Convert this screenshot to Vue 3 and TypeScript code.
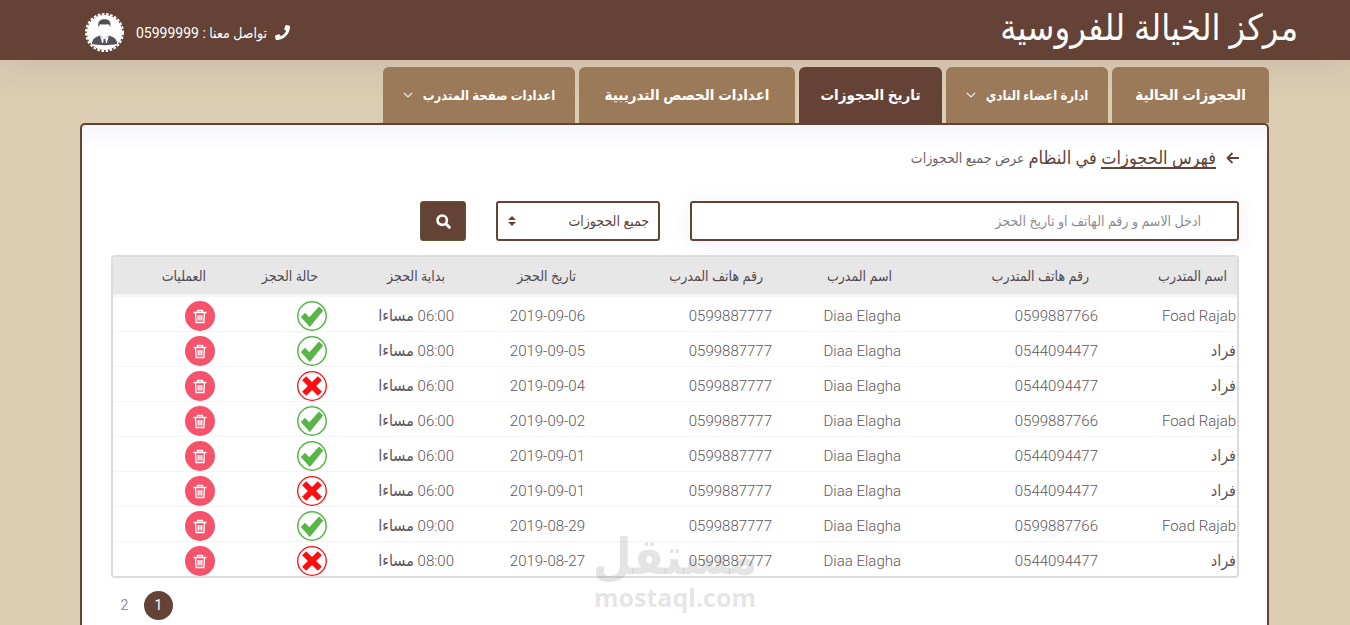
<script setup lang="ts">
import { ref } from 'vue'

interface Tab {
  label: string
  size: string
  menu: boolean
  active: boolean
}

interface Booking {
  known: boolean
  trainee: string
  traineePhone: string
  trainer: string
  trainerPhone: string
  date: string
  start: string
  ok: boolean
}

const tabs: Tab[] = [
  { label: 'الحجوزات الحالية', size: 'tab-current', menu: false, active: false },
  { label: 'ادارة اعضاء النادي', size: 'tab-members', menu: true, active: false },
  { label: 'تاريخ الحجوزات', size: 'tab-history', menu: false, active: true },
  { label: 'اعدادات الحصص التدريبية', size: 'tab-lessons', menu: false, active: false },
  { label: 'اعدادات صفحة المتدرب', size: 'tab-page', menu: true, active: false },
]

const columns = [
  { key: 'trainee', label: 'اسم المتدرب' },
  { key: 'trainee-phone', label: 'رقم هاتف المتدرب' },
  { key: 'trainer', label: 'اسم المدرب' },
  { key: 'trainer-phone', label: 'رقم هاتف المدرب' },
  { key: 'date', label: 'تاريخ الحجز' },
  { key: 'start', label: 'بداية الحجز' },
  { key: 'status', label: 'حالة الحجز' },
  { key: 'actions', label: 'العمليات' },
]

function booking(known: boolean, date: string, start: string, ok: boolean): Booking {
  return {
    known,
    trainee: known ? 'Foad Rajab' : 'فراد',
    traineePhone: known ? '0599887766' : '0544094477',
    trainer: 'Diaa Elagha',
    trainerPhone: '0599887777',
    date,
    start,
    ok,
  }
}

const bookings = ref<Booking[]>([
  booking(true, '2019-09-06', '06:00', true),
  booking(false, '2019-09-05', '08:00', true),
  booking(false, '2019-09-04', '06:00', false),
  booking(true, '2019-09-02', '06:00', true),
  booking(false, '2019-09-01', '06:00', true),
  booking(false, '2019-09-01', '06:00', false),
  booking(true, '2019-08-29', '09:00', true),
  booking(false, '2019-08-27', '08:00', false),
])

const query = ref('')
const filter = ref('all')

function remove(index: number) {
  bookings.value.splice(index, 1)
}
</script>

<template>
  <div class="page" dir="rtl" lang="ar">
    <header class="topbar">
      <div class="brand">مركز الخيالة للفروسية</div>
      <div class="contact">
        <svg class="phone" viewBox="0 0 512 512" aria-hidden="true">
          <path d="M493 25 389 1c-11-3-23 3-27 14l-48 112c-4 10-1 21 7 28l61 50c-36 76-99 139-177 177l-50-61c-7-8-18-11-28-7L15 362c-11 4-17 16-14 27l24 104c3 11 12 19 24 19 256 0 463-207 463-463 0-12-8-21-19-24z" fill="#fff" />
        </svg>
        <span class="contact-text">تواصل معنا : 05999999</span>
        <svg class="avatar" viewBox="0 0 39 39" role="img" aria-label="الحساب">
          <circle cx="19.5" cy="19.5" r="17.6" fill="#fff" />
          <circle cx="19.5" cy="19.5" r="18.5" fill="none" stroke="#fff" stroke-width="2" stroke-dasharray="2.6 1.6" />
          <path d="M13.500 14.500c-1.200-6 1.500-8.300 6-8.300s7 2.300 5.700 8.300c-.5-2-.7-3-2.200-3.300-3 .6-5 .4-7.500 0-1 .6-1.400 1.500-2 3.300z" fill="#514c54" />
          <path d="M14.200 15c.5 3.500 2.500 6 5.100 6s4.700-2.500 5.200-6" fill="none" stroke="#e9e7ea" stroke-width=".6" />
          <path d="M7 31c0-4 1.500-6.500 8.500-8.500l4 3.500 4-3.500c7 2 8.500 4.500 8.500 8.500-6 1.500-19 1.500-25 0z" fill="#56515b" />
          <path d="M15 22.500 17.200 30h4.600l2.200-7.500-4.500 3.500z" fill="#fff" />
          <path d="M18.700 26h1.600l.7 4.500h-3z" fill="#56515b" />
        </svg>
      </div>
    </header>

    <div class="container">
      <nav class="tabs" aria-label="القائمة الرئيسية">
        <a
          v-for="tab in tabs"
          :key="tab.label"
          href="#"
          class="tab"
          :class="[tab.size, { active: tab.active, menu: tab.menu }]"
        >
          <span>{{ tab.label }}</span>
          <svg v-if="tab.menu" class="chevron" viewBox="0 0 10 6" aria-hidden="true">
            <path d="m.8.8 4.200 4 4.200-4" fill="none" stroke="#fff" stroke-width="1.100" />
          </svg>
        </a>
      </nav>

      <main class="panel">
        <h1 class="heading">
          <svg class="back" viewBox="0 0 13 12" aria-hidden="true">
            <path d="M6.500 1 1.500 6l5 5M1.500 6H13" fill="none" stroke="#5c4339" stroke-width="1.800" />
          </svg>
          <span class="heading-text"><a href="#">فهرس الحجوزات</a> في النظام</span>
          <small>عرض جميع الحجوزات</small>
        </h1>

        <form class="filters" @submit.prevent>
          <input
            v-model="query"
            class="search"
            type="text"
            aria-label="بحث"
            placeholder="ادخل الاسم و رقم الهاتف او تاريخ الحجز"
          />
          <div class="select-box">
            <select v-model="filter" aria-label="نوع الحجوزات">
              <option value="all">جميع الحجوزات</option>
            </select>
            <svg class="sort" viewBox="0 0 8 10" aria-hidden="true">
              <path d="M4 0 8 4H0zM0 6h8l-4 4z" fill="#644336" />
            </svg>
          </div>
          <button class="submit" type="submit" aria-label="ابحث">
            <svg viewBox="0 0 15 15" aria-hidden="true">
              <circle cx="6.200" cy="6.200" r="4.700" fill="none" stroke="#fff" stroke-width="2.600" />
              <path d="m9.800 9.800 3.500 3.500" stroke="#fff" stroke-width="3" stroke-linecap="round" />
            </svg>
          </button>
        </form>

        <div class="table-box">
          <table>
            <colgroup>
              <col v-for="column in columns" :key="column.key" :class="'col-' + column.key" />
            </colgroup>
            <thead>
              <tr>
                <th v-for="column in columns" :key="column.key" scope="col">{{ column.label }}</th>
              </tr>
            </thead>
            <tbody>
              <tr v-for="(row, index) in bookings" :key="row.date + row.start + index">
                <td><span :class="{ arabic: !row.known }">{{ row.trainee }}</span></td>
                <td>{{ row.traineePhone }}</td>
                <td>{{ row.trainer }}</td>
                <td>{{ row.trainerPhone }}</td>
                <td><bdi dir="ltr">{{ row.date }}</bdi></td>
                <td>{{ row.start }} <span class="arabic">مساءا</span></td>
                <td>
                  <svg v-if="row.ok" class="status" viewBox="0 0 30 30" role="img" aria-label="مؤكد">
                    <circle cx="15" cy="15" r="14.200" fill="#fff" stroke="#5ab549" stroke-width="1.500" />
                    <path d="m3.800 16 4.200-4.200 4.300 4.400L22 5.600l4.300 4L12.800 26z" fill="#5ab549" />
                  </svg>
                  <svg v-else class="status" viewBox="0 0 30 30" role="img" aria-label="ملغي">
                    <circle cx="15" cy="15" r="14.300" fill="#fff" stroke="#f90f0f" stroke-width="1.300" />
                    <path d="m9.200 5.200 5.800 5.700 5.800-5.700 4.100 4-5.800 5.800 5.800 5.800-4.100 4-5.800-5.700-5.800 5.700-4.100-4 5.800-5.800-5.800-5.800z" fill="#f90f0f" />
                  </svg>
                </td>
                <td>
                  <button class="delete" type="button" aria-label="حذف" @click="remove(index)">
                    <svg viewBox="0 0 14 15" aria-hidden="true">
                      <path d="M.5 3.500h13M4.500 3.500v-2h5v2M2.500 3.500l.6 10h7.800l.6-10M5.200 6v5.500M7 6v5.500M8.800 6v5.500" fill="none" stroke="#fff" stroke-width="1.300" />
                    </svg>
                  </button>
                </td>
              </tr>
            </tbody>
          </table>
          <div class="watermark" aria-hidden="true">
            <span class="mark-name">مستقل</span>
            <span class="mark-site" dir="ltr">mostaql.com</span>
          </div>
        </div>

        <nav class="pagination" aria-label="الصفحات" dir="ltr">
          <a href="#">2</a>
          <a href="#" class="current" aria-current="page">1</a>
        </nav>
      </main>
    </div>
  </div>
</template>

<style>
html,
body {
  margin: 0;
  background: #dcccb2;
}
</style>

<style scoped>
* {
  box-sizing: border-box;
}

.page {
  display: flex;
  flex-direction: column;
  min-height: 100vh;
  font-family: Roboto, 'DejaVu Sans Condensed', 'DejaVu Sans', sans-serif;
  font-size: 14px;
  color: #5c565c;
  background: #dcccb2;
}

a {
  color: inherit;
  text-decoration: none;
}

.topbar {
  display: flex;
  justify-content: space-between;
  height: 60px;
  padding: 0 52px 0 85px;
  color: #fff;
  background: #644336;
  box-shadow: 0 0 40px rgba(82, 63, 105, 0.15);
}

.brand {
  font-size: 36px;
  line-height: 56px;
  white-space: nowrap;
}

.contact {
  display: flex;
  align-items: center;
  gap: 8px;
  padding-top: 5px;
}

.phone {
  width: 15px;
  height: 15px;
}

.contact-text {
  white-space: nowrap;
}

.avatar {
  width: 39px;
  height: 39px;
  margin-right: 4px;
}

.container {
  display: flex;
  flex: 1;
  flex-direction: column;
  margin: 7px 81px 0 80px;
}

.tabs {
  display: flex;
  gap: 4px;
  height: 56px;
}

.tab {
  display: flex;
  align-items: center;
  justify-content: center;
  gap: 10px;
  height: 56px;
  border-radius: 6px 6px 0 0;
  color: #fff;
  background: #9a7a58;
  font-size: 15px;
  font-weight: 700;
  white-space: nowrap;
}

.tab.menu {
  font-size: 13px;
}

.tab.active {
  background: #644336;
}

.tab-current {
  width: 157px;
}

.tab-members {
  width: 162px;
}

.tab-history {
  width: 143px;
}

.tab-lessons {
  width: 216px;
}

.tab-page {
  width: 192px;
}

.chevron {
  width: 10px;
  height: 6px;
}

.panel {
  flex: 1;
  padding: 20px 28px 20px 29px;
  border: 2px solid #644336;
  border-bottom: 0;
  border-radius: 5px 5px 0 0;
  background: linear-gradient(#f6f7fa, #fff 26px);
}

.heading {
  display: flex;
  align-items: center;
  height: 26px;
  margin: 0 0 30px;
  color: #5c4339;
  font-size: 18px;
  font-weight: 400;
  white-space: nowrap;
}

.back {
  width: 13px;
  height: 12px;
  margin-left: 10px;
}

.heading-text a {
  display: inline-block;
  border-bottom: 2px solid #644336;
  line-height: 18px;
}

.heading small {
  margin-right: 4px;
  color: #6c6267;
  font-size: 14px;
}

.filters {
  display: flex;
  gap: 30px;
  height: 40px;
  margin-bottom: 14px;
}

.search,
.select-box select {
  height: 40px;
  border: 2px solid #644336;
  border-radius: 3px;
  background: #fff;
  font-family: inherit;
  font-size: 14px;
}

.search {
  width: 549px;
  padding: 0 36px;
  color: #5c4339;
  box-shadow: 0 3px 20px rgba(113, 106, 202, 0.11);
}

.search::placeholder {
  color: #8c8c92;
  opacity: 1;
}

.select-box {
  position: relative;
  width: 164px;
}

.select-box select {
  width: 100%;
  padding: 0 9px 0 24px;
  color: #5c4339;
  appearance: none;
}

.sort {
  position: absolute;
  top: 15px;
  left: 12px;
  width: 8px;
  height: 10px;
  pointer-events: none;
}

.submit {
  width: 46px;
  height: 40px;
  padding: 4px 0 0;
  border: 1px solid #5b5a34;
  border-radius: 3px;
  background: #644336;
}

.submit svg {
  width: 15px;
  height: 15px;
}

.table-box {
  position: relative;
  border: 2px solid #dcdcdc;
  border-radius: 4px;
}

table {
  width: 100%;
  table-layout: fixed;
  border-collapse: separate;
  border-spacing: 0;
}

.col-trainee {
  width: 138px;
}

.col-trainee-phone {
  width: 197px;
}

.col-trainer {
  width: 129px;
}

.col-trainer-phone {
  width: 187px;
}

.col-date {
  width: 131px;
}

.col-start {
  width: 127px;
}

.col-status {
  width: 112px;
}

.col-actions {
  width: 103px;
}

th {
  height: 40px;
  padding: 0 10px 0 0;
  border-bottom: 3px solid #f4f5f8;
  color: #51494f;
  background: #e7e7e7;
  font-size: 14px;
  font-weight: 400;
  text-align: right;
  white-space: nowrap;
}

td {
  height: 35px;
  padding: 4px 1px 0 0;
  border-bottom: 1px solid #f4f5f8;
  font-size: 15px;
  font-weight: 300;
  line-height: 30px;
  text-align: right;
  vertical-align: top;
  white-space: nowrap;
}

tbody tr:last-child td {
  height: 34px;
  border-bottom: 0;
}

.arabic {
  font-size: 16px;
  line-height: 20px;
}

.status {
  display: block;
  width: 30px;
  height: 30px;
}

.delete {
  display: flex;
  align-items: center;
  justify-content: center;
  width: 30px;
  height: 30px;
  padding: 0;
  border: 0;
  border-radius: 50%;
  background: #f5536c;
}

.delete svg {
  width: 14px;
  height: 15px;
}

.watermark {
  position: absolute;
  bottom: -36px;
  left: 480px;
  display: flex;
  flex-direction: column;
  align-items: center;
  width: 164px;
  color: rgba(120, 120, 120, 0.2);
  font-weight: 700;
  white-space: nowrap;
  pointer-events: none;
}

.mark-name {
  font-size: 50px;
  line-height: 50px;
}

.mark-site {
  font-family: 'Open Sans', sans-serif;
  font-size: 25px;
  line-height: 30px;
}

.pagination {
  display: flex;
  gap: 6px;
  margin-top: 13px;
}

.pagination a {
  width: 29px;
  height: 29px;
  border-radius: 50%;
  color: #93939a;
  font-size: 14px;
  line-height: 29px;
  text-align: center;
}

.pagination a:first-child {
  width: 27px;
}

.pagination .current {
  color: #fff;
  background: #644336;
}
</style>
